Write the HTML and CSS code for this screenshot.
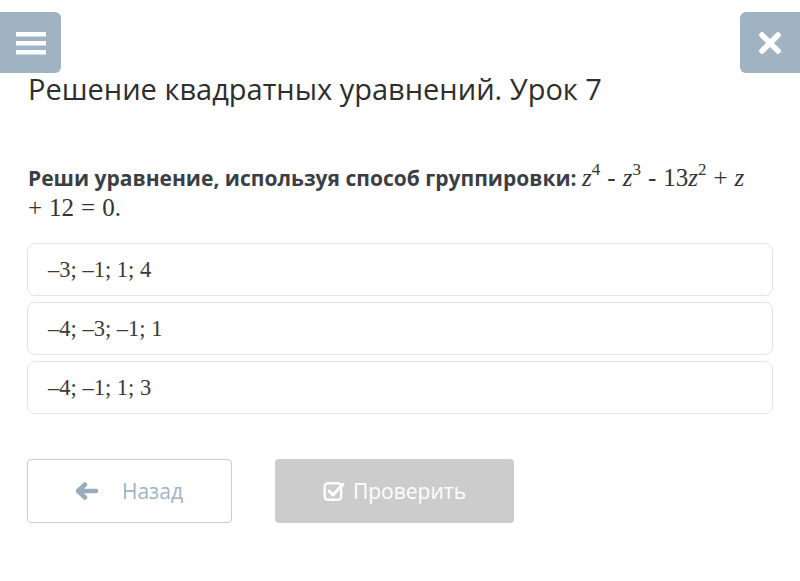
FILE: index.html
```html
<!DOCTYPE html>
<html lang="ru">
<head>
<meta charset="utf-8">
<link rel="stylesheet" href="styles.css">
</head>
<body>
<div class="topbar">
  <div class="tbtn menu">
    <svg width="30" height="26" viewBox="0 0 30 26"><rect x="0" y="2" width="30" height="4.5" fill="#fff"/><rect x="0" y="11" width="30" height="4.5" fill="#fff"/><rect x="0" y="20" width="30" height="4.5" fill="#fff"/></svg>
  </div>
  <div class="tbtn close">
    <svg width="24" height="24" viewBox="0 0 24 24"><path d="M4 4 L20 20 M20 4 L4 20" stroke="#fff" stroke-width="5.5" stroke-linecap="round"/></svg>
  </div>
</div>
<main class="content">
  <h1 class="title">Решение квадратных уравнений. Урок 7</h1>
  <p class="question"><b>Реши уравнение, используя способ группировки:</b> <span class="math"><i>z</i><sup>4</sup><span class="op">-</span><i>z</i><sup>3</sup><span class="op">-</span>13<i>z</i><sup>2</sup><span class="op">+</span><i>z</i></span><br><span class="math"><span class="op first">+</span>12<span class="op">=</span>0.</span></p>
  <div class="options">
    <div class="option"><span class="math">–3; –1; 1; 4</span></div>
    <div class="option"><span class="math">–4; –3; –1; 1</span></div>
    <div class="option"><span class="math">–4; –1; 1; 3</span></div>
  </div>
  <div class="actions">
    <div class="btn back">
      <svg width="22" height="18" viewBox="0 0 22 18"><path d="M2 9 L9 2.5 M2 9 L9 15.5 M3 9 H20" stroke="#97adbd" stroke-width="4.5" stroke-linecap="round" stroke-linejoin="round" fill="none"/></svg>
      <span>Назад</span>
    </div>
    <div class="btn check">
      <svg width="22" height="22" viewBox="0 0 20 20"><rect x="1.5" y="3" width="15" height="15" rx="3" stroke="#fff" stroke-width="2.2" fill="none"/><path d="M5.5 10 L9 13.5 L18 4" stroke="#fff" stroke-width="2.8" fill="none" stroke-linecap="round" stroke-linejoin="round"/></svg>
      <span>Проверить</span>
    </div>
  </div>
</main>
</body>
</html>
```
FILE: styles.css
```css
html, body {
  margin: 0;
  padding: 0;
  background: #fff;
}
body {
  width: 800px;
  height: 581px;
  overflow: hidden;
  font-family: "Open Sans", "Noto Sans", sans-serif;
  color: #333;
}
.topbar {
  display: flex;
  justify-content: space-between;
  padding-top: 12px;
}
.tbtn {
  width: 61px;
  height: 61px;
  background: #9fb3c2;
  display: flex;
  align-items: center;
  justify-content: center;
}
.menu {
  border-radius: 0 6px 6px 0;
}
.close {
  width: 60px;
  border-radius: 6px 0 0 6px;
}
.content {
  padding: 0 27px 0 27px;
}
.title {
  margin: 0 0 0 1px;
  font-weight: 400;
  font-size: 29px;
  line-height: 32px;
  color: #2e2e2e;
}
.question {
  margin: 58px 0 0 1px;
  font-size: 21px;
  line-height: 30px;
  color: #3b3f44;
}
.question b {
  font-weight: 700;
}
.math {
  font-family: "Liberation Serif", "DejaVu Serif", serif;
  font-size: 25px;
  font-weight: 400;
  line-height: 30px;
  color: #333;
}
.math i {
  font-style: italic;
}
.math sup {
  font-size: 17px;
  line-height: 0;
  vertical-align: 11px;
}
.op {
  padding: 0 7px;
}
.op.first {
  padding-left: 0;
}
.options {
  margin-top: 20px;
  display: flex;
  flex-direction: column;
  gap: 6px;
}
.option {
  height: 51px;
  border: 1px solid #e3e3e3;
  border-radius: 8px;
  display: flex;
  align-items: center;
  padding-left: 20px;
}
.option .math {
  font-size: 22.5px;
  color: #3a3a3a;
}
.actions {
  margin-top: 45px;
  display: flex;
  gap: 43px;
}
.btn {
  height: 64px;
  border-radius: 4px;
  display: flex;
  align-items: center;
  justify-content: center;
  font-size: 21px;
  box-sizing: border-box;
}
.back {
  width: 205px;
  border: 1px solid #c8ccd0;
  color: #9fb3c2;
  gap: 24px;
}
.check {
  width: 239px;
  background: #cccccc;
  color: #fff;
  gap: 8px;
}
```
